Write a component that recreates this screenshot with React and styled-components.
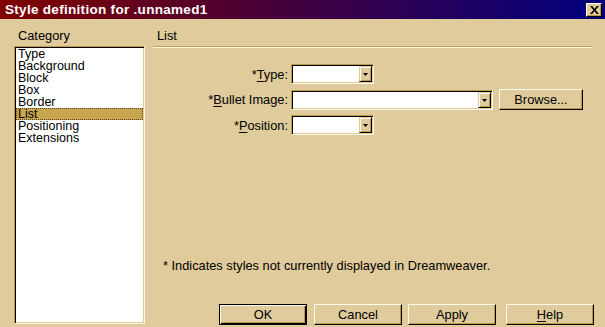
import React from "react";
import styled, { createGlobalStyle } from "styled-components";

const FACE = "#dfcb9b";
const SHADOW = "#b89a48";
const LIGHT = "#fffaec";

const GlobalStyle = createGlobalStyle`
  body {
    margin: 0;
    background: ${FACE};
  }
`;

const categories = [
  "Type",
  "Background",
  "Block",
  "Box",
  "Border",
  "List",
  "Positioning",
  "Extensions",
];

const App = () => {
  return (
    <Dialog>
      <GlobalStyle />
      <TitleBar>
        <Title>Style definition for .unnamed1</Title>
        <CloseButton>
          <svg width="9" height="8" viewBox="0 0 9 8">
            <path d="M0 0h2.2l2.3 2.7L6.8 0H9L5.6 4 9 8H6.8L4.5 5.3 2.2 8H0l3.4-4z" fill="#000" />
          </svg>
        </CloseButton>
      </TitleBar>
      <Body>
        <LeftColumn>
          <Heading>Category</Heading>
          <ListBox>
            {categories.map(name => (
              <ListItem key={name} $selected={name === "List"}>
                {name}
              </ListItem>
            ))}
          </ListBox>
        </LeftColumn>
        <RightColumn>
          <Heading>List</Heading>
          <Separator />
          <Form>
            <Label>
              *<u>T</u>ype:
            </Label>
            <Combo $width={83}>
              <DropButton>
                <Arrow />
              </DropButton>
            </Combo>
            <span />
            <Label>
              *<u>B</u>ullet Image:
            </Label>
            <Combo $width={202}>
              <DropButton>
                <Arrow />
              </DropButton>
            </Combo>
            <Button $width={84} $space={6}>Browse...</Button>
            <Label>
              *<u>P</u>osition:
            </Label>
            <Combo $width={83}>
              <DropButton>
                <Arrow />
              </DropButton>
            </Combo>
            <span />
          </Form>
          <Note>* Indicates styles not currently displayed in Dreamweaver.</Note>
          <ButtonRow>
            <Button $default>OK</Button>
            <Button $space={7}>Cancel</Button>
            <Button $space={6}>Apply</Button>
            <Button $space={10}>
              <u>H</u>elp
            </Button>
          </ButtonRow>
        </RightColumn>
      </Body>
    </Dialog>
  );
};

const Arrow = () => (
  <svg width="5" height="3" viewBox="0 0 5 3">
    <path d="M0 0h5L2.5 3z" fill="#000" />
  </svg>
);

const Dialog = styled.div`
  width: 605px;
  height: 327px;
  background: ${FACE};
  font-family: "Liberation Sans", Arial, sans-serif;
  font-size: 12.8px;
  color: #000;
  overflow: hidden;
`;

const TitleBar = styled.div`
  height: 19px;
  display: flex;
  align-items: center;
  justify-content: space-between;
  padding: 0 3px 0 5px;
  background: linear-gradient(to right, #800000, #000080);
`;

const Title = styled.span`
  color: #fff;
  font-weight: bold;
  font-size: 13.5px;
  letter-spacing: 0.3px;
`;

const CloseButton = styled.div`
  width: 16px;
  height: 14px;
  box-sizing: border-box;
  display: flex;
  align-items: center;
  justify-content: center;
  background: ${FACE};
  border: 1px solid;
  border-color: ${LIGHT} #000 #000 ${LIGHT};
  box-shadow: inset -1px -1px ${SHADOW};
`;

const Body = styled.div`
  display: flex;
  height: 308px;
`;

const LeftColumn = styled.div`
  margin-left: 14px;
  width: 131px;
  display: flex;
  flex-direction: column;
`;

const Heading = styled.div`
  height: 27px;
  box-sizing: border-box;
  padding: 10px 0 0 4px;
  line-height: 14px;
`;

const ListBox = styled.div`
  height: 278px;
  box-sizing: border-box;
  background: #fff;
  border: 1px solid;
  border-color: ${SHADOW} ${LIGHT} ${LIGHT} ${SHADOW};
  box-shadow: inset 1px 1px #000, inset -1px -1px ${FACE};
  padding: 1px;
`;

const ListItem = styled.div`
  height: 12px;
  line-height: 12px;
  padding-left: 2px;
  box-sizing: border-box;
  white-space: nowrap;
  font-size: 12.5px;
  background: ${p => (p.$selected ? "#c8a64f" : "transparent")};
  outline: ${p => (p.$selected ? "1px dotted #5a4a20" : "none")};
  outline-offset: -1px;
`;

const RightColumn = styled.div`
  margin-left: 8px;
  width: 441px;
  display: flex;
  flex-direction: column;
`;

const Separator = styled.div`
  margin-right: 2px;
  border-top: 1px solid #c4a245;
  border-bottom: 1px solid ${LIGHT};
`;

const Form = styled.div`
  margin-top: 16px;
  display: grid;
  grid-template-columns: 138px auto 1fr;
  grid-auto-rows: 20px;
  row-gap: 5.5px;
  align-items: center;
`;

const Label = styled.label`
  text-align: right;
  padding-right: 3px;
  white-space: nowrap;
  u {
    text-underline-offset: 2px;
  }
`;

const Combo = styled.div`
  width: ${p => p.$width}px;
  height: 20px;
  box-sizing: border-box;
  background: #fff;
  border: 1px solid;
  border-color: ${SHADOW} ${LIGHT} ${LIGHT} ${SHADOW};
  box-shadow: inset 1px 1px #000, inset -1px -1px ${FACE};
  display: flex;
  justify-content: flex-end;
  padding: 1px;
`;

const DropButton = styled.div`
  width: 13px;
  height: 16px;
  box-sizing: border-box;
  background: ${FACE};
  border: 1px solid;
  border-color: ${FACE} #000 #000 ${FACE};
  box-shadow: inset 1px 1px ${LIGHT}, inset -1px -1px ${SHADOW};
  display: flex;
  align-items: center;
  justify-content: center;
  padding-top: 1px;
`;

const Button = styled.div`
  width: ${p => p.$width || 88}px;
  height: 21px;
  margin-left: ${p => p.$space || 0}px;
  justify-self: start;
  box-sizing: border-box;
  display: flex;
  align-items: center;
  justify-content: center;
  background: ${FACE};
  border: 1px solid;
  border-color: ${p => (p.$default ? "#000" : `${LIGHT} #000 #000 ${LIGHT}`)};
  box-shadow: ${p =>
    p.$default
      ? `inset 1px 1px ${LIGHT}, inset -1px -1px #000, inset -2px -2px ${SHADOW}`
      : `inset -1px -1px ${SHADOW}`};
  u {
    text-underline-offset: 2px;
  }
`;

const Note = styled.div`
  margin-top: auto;
  padding-left: 10px;
  line-height: 14px;
`;

const ButtonRow = styled.div`
  display: flex;
  margin: 31px 0 2px 66px;
`;

export default App;
